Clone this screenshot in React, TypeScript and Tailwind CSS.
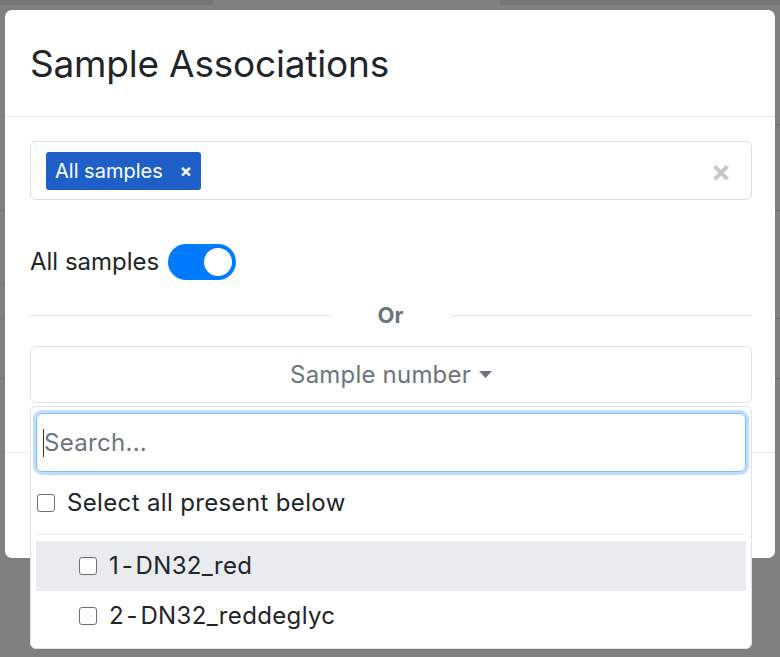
import React from "react";

function Checkbox() {
  return <span className="inline-block w-[18px] h-[18px] rounded-[3px] border-[1.5px] border-[#6f6f6f] bg-white shrink-0" />;
}

export default function App() {
  return (
    <div
      className="relative w-[780px] h-[657px] overflow-hidden bg-[#808080]"
      style={{ fontFamily: "Inter, 'Noto Sans', sans-serif" }}
    >
      {/* dimmed page behind */}
      <div className="absolute left-0 top-0 w-[213px] h-[5px] bg-[#767676]" />
      <div className="absolute left-[500px] top-0 w-[280px] h-[5px] bg-[#767676]" />
      <div className="absolute left-0 top-[210px] w-[5px] h-px bg-[#6e6e6e]" />
      <div className="absolute left-0 top-[283px] w-[5px] h-px bg-[#6e6e6e]" />
      <div className="absolute left-0 top-[318px] w-[5px] h-px bg-[#6e6e6e]" />
      <div className="absolute left-0 top-[378px] w-[5px] h-px bg-[#6e6e6e]" />
      <div className="absolute right-0 top-[124px] w-[5px] h-px bg-[#6e6e6e]" />
      <div className="absolute right-0 top-[210px] w-[5px] h-px bg-[#6e6e6e]" />
      <div className="absolute right-0 top-[318px] w-[5px] h-px bg-[#6e6e6e]" />
      <div className="absolute right-0 top-[378px] w-[5px] h-px bg-[#6e6e6e]" />

      {/* modal */}
      <div className="relative ml-[5px] mt-[10px] w-[770px] h-[548px] bg-white rounded-[7px] flex flex-col">
        <div className="h-[107px] border-b border-[#e5e7ea] flex items-center px-[25px]">
          <h1 className="text-[37px] text-[#212529] leading-none tracking-[-0.2px]">Sample Associations</h1>
        </div>

        <div className="h-[335px] pl-[25px] pr-[23px] pt-[24px] flex flex-col">
          {/* tag input */}
          <div className="h-[59px] w-[722px] border border-[#d9dcdf] rounded-[6px] flex items-center pl-[15px] pr-[20px]">
            <span className="h-[38px] px-[9px] bg-[#1f5fc8] rounded-[3px] flex items-center gap-[17px] text-white text-[20px]">
              All samples
              <span className="font-bold text-[18px]">×</span>
            </span>
            <span className="ml-auto text-[#c8c8c8] text-[30px] font-bold leading-none">×</span>
          </div>

          {/* toggle */}
          <div className="mt-[43px] h-[38px] flex items-center gap-[9px]">
            <span className="text-[24px] text-[#212529]">All samples</span>
            <span className="w-[68px] h-[36px] rounded-full bg-[#007bff] flex items-center justify-end pr-[4px]">
              <span className="w-[28px] h-[28px] rounded-full bg-white" />
            </span>
          </div>

          {/* Or divider */}
          <div className="mt-[20px] h-[28px] flex items-center">
            <div className="w-[300px] h-px bg-[#dee2e6]" />
            <span className="w-[121px] text-center text-[22px] font-bold text-[#6c757d]">Or</span>
            <div className="flex-1 h-px bg-[#dee2e6]" />
          </div>

          {/* dropdown button */}
          <div className="relative mt-[17px]">
            <div className="h-[57px] border border-[#dfe2e6] rounded-[6px] flex items-center justify-center gap-[8px] text-[24px] text-[#6c757d] tracking-[0.2px]">
              Sample number
              <svg width="13" height="8" viewBox="0 0 13 8"><path d="M0 0h13L6.5 7z" fill="#6c757d" /></svg>
            </div>

            {/* menu */}
            <div className="absolute left-0 top-[60px] w-[722px] h-[243px] bg-white border border-[#dfe2e6] rounded-[6px] px-[5px] pt-[6px] z-10">
              <div className="h-[59px] rounded-[6px] border border-[#80bdff] shadow-[0_0_0_3px_rgba(0,123,255,0.25)] flex items-center pl-[6px]">
                <span className="w-px h-[28px] bg-[#333]" />
                <span className="text-[24px] text-[#6c757d] tracking-[0.3px]">Search...</span>
              </div>
              <div className="h-[62px] flex items-center gap-[12px] pl-[1px]">
                <Checkbox />
                <span className="text-[24px] text-[#212529] tracking-[0.35px]">Select all present below</span>
              </div>
              <div className="h-px bg-[#e5e7ea]" />
              <div className="mt-[6px] h-[50px] bg-[#e9ecef] flex items-center gap-[12px] pl-[43px]">
                <Checkbox />
                <span className="text-[24px] text-[#212529] tracking-[0.35px]">1{"\u200A"}-{"\u200A"}DN32_red</span>
              </div>
              <div className="h-[50px] flex items-center gap-[12px] pl-[43px]">
                <Checkbox />
                <span className="text-[24px] text-[#212529] tracking-[0.35px]">2{"\u200A"}-{"\u200A"}DN32_reddeglyc</span>
              </div>
            </div>
          </div>
        </div>

        <div className="flex-1 border-t border-[#e5e7ea]" />
      </div>
    </div>
  );
}
